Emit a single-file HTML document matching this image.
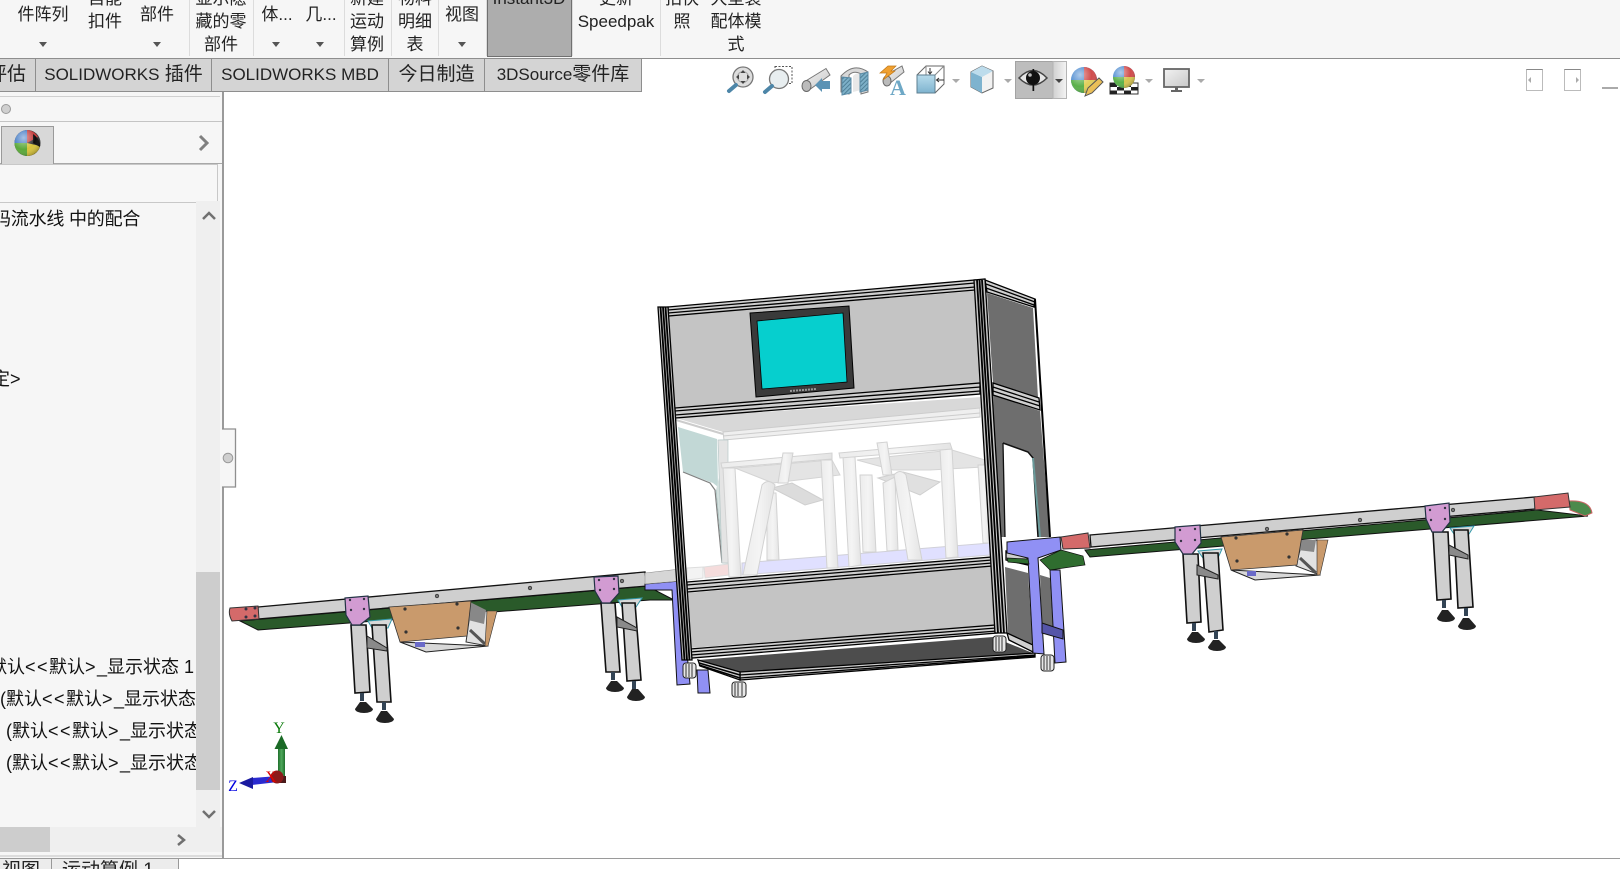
<!DOCTYPE html>
<html lang="zh"><head><meta charset="utf-8"><title>SOLIDWORKS</title>
<style>
html,body{margin:0;padding:0;width:1620px;height:869px;overflow:hidden;background:#fff}
body{position:relative;font-family:"Liberation Sans","Noto Sans CJK SC",sans-serif;color:#1a1a1a}
.a{position:absolute}
.tb{position:absolute;top:0;left:0;width:1620px;height:58px;background:#f6f6f6;border-bottom:1px solid #8e8e8e;box-sizing:content-box}
.l{position:absolute;width:120px;text-align:center;font-size:17px;line-height:23px;white-space:nowrap;color:#222}
.s{position:absolute;top:0;width:1px;height:56px;background:#dcdcdc}
.d{position:absolute;top:42px;width:0;height:0;border-left:4px solid transparent;border-right:4px solid transparent;border-top:5px solid #555}
.t{position:absolute;top:59px;height:32px;background:#d4d4d4;border-right:1px solid #8e8e8e;border-bottom:1px solid #8e8e8e;font-size:19px;line-height:32px;text-align:center;white-space:nowrap;color:#222;box-sizing:content-box;overflow:hidden}
.t i{font-style:normal;font-size:17px}
.tr{position:absolute;font-size:18px;line-height:24px;white-space:nowrap;color:#111}
.tr b{font-weight:400;letter-spacing:1.500px}
</style></head><body>
<div class="tb"></div>
<div class="l" style="left:-17px;top:3px">件阵列</div><div class="d" style="left:39px"></div>
<div class="l" style="left:45px;top:-13px">自能<br>扣件</div>
<div class="l" style="left:97px;top:3px">部件</div><div class="d" style="left:153px"></div>
<div class="s" style="left:189px"></div>
<div class="l" style="left:161px;top:-13px">显示隐<br>藏的零<br>部件</div>
<div class="s" style="left:253px"></div>
<div class="l" style="left:217px;top:3px">体...</div><div class="d" style="left:272px"></div>
<div class="l" style="left:261px;top:3px">几...</div><div class="d" style="left:316px"></div>
<div class="s" style="left:344px"></div>
<div class="l" style="left:307px;top:-13px">新建<br>运动<br>算例</div>
<div class="s" style="left:391px"></div>
<div class="l" style="left:355px;top:-13px">物料<br>明细<br>表</div>
<div class="s" style="left:438px"></div>
<div class="l" style="left:402px;top:3px">视图</div><div class="d" style="left:458px"></div>
<div class="s" style="left:486px"></div>
<div class="a" style="left:487px;top:-2px;width:83px;height:57px;background:#adadad;border:1px solid #707070"></div>
<div class="l" style="left:469px;top:-13px">Instant3D</div>
<div class="s" style="left:572px"></div>
<div class="l" style="left:556px;top:-13px">更新<br>Speedpak</div>
<div class="s" style="left:660px"></div>
<div class="l" style="left:622px;top:-13px">拍快<br>照</div>
<div class="l" style="left:676px;top:-13px">大型装<br>配体模<br>式</div>

<div class="t" style="left:0;width:35px"><span class="a" style="left:-12px;top:0">评估</span></div>
<div class="t" style="left:36px;width:175px"><i>SOLIDWORKS</i> 插件</div>
<div class="t" style="left:212px;width:176px"><i>SOLIDWORKS MBD</i></div>
<div class="t" style="left:389px;width:95px">今日制造</div>
<div class="t" style="left:485px;width:156px"><i>3DSource</i>零件库</div>

<!-- sidebar -->
<div class="a" style="left:0;top:92px;width:222px;height:766px;background:#f6f6f6;border-right:2px solid #9a9a9a;box-sizing:content-box"></div>
<div class="a" style="left:0;top:96px;width:220px;height:1px;background:#d0d0d0"></div>
<div class="a" style="left:0;top:121px;width:222px;height:1px;background:#c4c4c4"></div>
<div class="a" style="left:0;top:163px;width:222px;height:1px;background:#a8a8a8"></div>
<div class="a" style="left:1px;top:126px;width:51px;height:37px;background:#d8d8d8;border:1px solid #9a9a9a;border-bottom:0"></div>
<div class="a" style="left:-2px;top:164px;width:218px;height:37px;border:1px solid #c8c8c8;background:#f7f7f7"></div>
<div class="a" style="left:196px;top:201px;width:24px;height:626px;background:#efefef"></div>
<div class="a" style="left:196px;top:572px;width:24px;height:218px;background:#cdcdcd"></div>
<div class="a" style="left:0;top:827px;width:222px;height:25px;background:#efefef"></div>
<div class="a" style="left:0;top:827px;width:50px;height:25px;background:#cdcdcd"></div>
<div class="a" style="left:0;top:855px;width:222px;height:2px;background:#dcdcdc"></div>

<div class="tr" style="left:-7px;top:207px;letter-spacing:-.2px">码流水线 中的配合</div>
<div class="tr" style="left:-8px;top:367px">定&gt;</div>
<div class="a" style="left:0;top:620px;width:196px;height:170px;overflow:hidden">
<div class="tr" style="left:-11px;top:35px">默认<b>&lt;&lt;</b>默认<b>&gt;</b>_显示状态 1</div>
<div class="tr" style="left:0;top:67px">(默认<b>&lt;&lt;</b>默认<b>&gt;</b>_显示状态 1</div>
<div class="tr" style="left:6px;top:99px">(默认<b>&lt;&lt;</b>默认<b>&gt;</b>_显示状态 1</div>
<div class="tr" style="left:6px;top:131px">(默认<b>&lt;&lt;</b>默认<b>&gt;</b>_显示状态 1</div>
</div>

<div class="a" style="left:0;top:858px;width:1620px;height:1px;background:#9a9a9a"></div>
<div class="a" style="left:0;top:859px;width:1620px;height:10px;background:#fff"></div>
<div class="a" style="left:0;top:859px;width:178px;height:10px;background:#ececec"></div>
<div class="a" style="left:51px;top:859px;width:1px;height:10px;background:#999"></div>
<div class="a" style="left:178px;top:859px;width:1px;height:10px;background:#999"></div>
<div class="a" style="left:0;top:856px;width:178px;height:13px;overflow:hidden;font-size:19px;line-height:24px;white-space:nowrap;color:#222">
<span class="a" style="left:2px;top:3px">视图</span><span class="a" style="left:62px;top:3px">运动算例 1</span></div>

<svg class="a" style="left:0;top:0" width="1620" height="869" viewBox="0 0 1620 869" xmlns="http://www.w3.org/2000/svg">
<defs>
<linearGradient id="tube" x1="0" x2="1" y1="0" y2="0"><stop offset="0" stop-color="#ececec"/><stop offset=".5" stop-color="#f4f4f4"/><stop offset="1" stop-color="#e4e4e4"/></linearGradient>
<linearGradient id="blue" x1="0" x2="0" y1="0" y2="1"><stop offset="0" stop-color="#b8dcec"/><stop offset="1" stop-color="#7eb3cf"/></linearGradient>
<linearGradient id="grn" x1="0" x2="1" y1="0" y2="0"><stop offset="0" stop-color="#1f6f2c"/><stop offset=".5" stop-color="#4fa85c"/><stop offset="1" stop-color="#1f6f2c"/></linearGradient>
<radialGradient id="gl" cx=".35" cy=".3" r=".75"><stop offset="0" stop-color="#fff" stop-opacity=".55"/><stop offset=".6" stop-color="#fff" stop-opacity="0"/><stop offset="1" stop-color="#000" stop-opacity=".25"/></radialGradient>
<linearGradient id="mon" x1="0" x2="1" y1="0" y2="1"><stop offset="0" stop-color="#f2f2f2"/><stop offset="1" stop-color="#c8c8c8"/></linearGradient>
<linearGradient id="dd" x1="0" x2="1" y1="0" y2="0"><stop offset="0" stop-color="#d0d0d0"/><stop offset="1" stop-color="#f4f4f4"/></linearGradient>
<pattern id="hat" width="3" height="3" patternUnits="userSpaceOnUse" patternTransform="rotate(45)"><rect width="3" height="3" fill="#7db0c8"/><rect width="1" height="3" fill="#4f8097"/></pattern>
</defs>

<!-- sidebar controls -->
<circle cx="6" cy="109" r="4.5" fill="#d0d0d0" stroke="#999"/>
<g><circle cx="27.500" cy="143" r="13" fill="#333"/>
<path d="M27 130A13 13 0 0 0 14.500 143H27Z" fill="#3f78c4"/>
<path d="M14.500 143A13 13 0 0 0 27 156V143Z" fill="#5aa83a"/>
<path d="M27 156A13 13 0 0 0 40 146L27 143Z" fill="#d6c23a"/>
<path d="M27 130A13 13 0 0 1 38 137L27 143Z" fill="#c23a3a"/>
<path d="M33 134Q41 140 40 147L33 143Z" fill="#0c0c0c"/><circle cx="27.500" cy="143" r="13" fill="url(#gl)"/></g>
<path d="M200 136l7 7-7 7" fill="none" stroke="#808080" stroke-width="3"/>
<path d="M203 219l6-6 6 6" fill="none" stroke="#707070" stroke-width="2.500"/>
<path d="M203 811l6 6 6-6" fill="none" stroke="#707070" stroke-width="2.500"/>
<path d="M178 835l6 5-6 5" fill="none" stroke="#707070" stroke-width="2.500"/>
<!-- collapse handle -->
<path d="M222 429H235V487H222Z" fill="#f6f6f6"/><path d="M222 429H235.500V487H222" fill="none" stroke="#8f8f8f" stroke-width="1.300"/>
<rect x="221" y="430" width="2" height="56" fill="#f6f6f6"/>
<circle cx="228" cy="458" r="4.800" fill="#cfcfcf" stroke="#999"/>

<!-- top right icons -->
<g>
<circle cx="743" cy="77" r="10" fill="#ddd" stroke="#777" stroke-width="1.300"/>
<circle cx="743" cy="77" r="5.500" fill="none" stroke="#aaa"/>
<path d="M743 70l2.500 3h-5zM743 84l2.500-3h-5zM736 77l3-2.500v5zM750 77l-3-2.500v5z" fill="#444"/>
<path d="M736 85l-7 6" stroke="#4d86a8" stroke-width="4" stroke-linecap="round"/>
<rect x="775" y="66.500" width="17" height="17" fill="none" stroke="#555" stroke-dasharray="2 1.500"/>
<circle cx="779" cy="79" r="9.500" fill="#e8eef0" stroke="#777" stroke-width="1.300"/>
<path d="M772 86l-7 6" stroke="#4d86a8" stroke-width="4" stroke-linecap="round"/>
<path d="M804 82L826 68.500L830 75L809 90Z" fill="url(#mon)" stroke="#777"/>
<ellipse cx="806.500" cy="86" rx="4.500" ry="5.500" fill="#bbb" stroke="#666"/>
<path d="M830 81H822V78L815 85L822 92V89H830Z" fill="#5b93b5"/>
<path d="M841 76Q854 62 868 72V92L861 94V74Q854 70 849 75V94L841 92Z" fill="#d8d8d8" stroke="#777"/>
<path d="M853 76Q857 72 861 74V90L853 92Z" fill="#e8e8e8"/>
<path d="M842 77L851 78V93L842 95Z" fill="url(#hat)" stroke="#5a8aa5"/>
<path d="M860 74L868 72V90L860 92Z" fill="url(#hat)" stroke="#5a8aa5"/>
<path d="M886 75L902 66L904 72L889 84Z" fill="url(#mon)" stroke="#777"/>
<ellipse cx="887" cy="81" rx="4" ry="5" fill="#bbb" stroke="#666"/>
<path d="M888 66H896L891 71H895L883 80L887 73H880Z" fill="#f0a030" stroke="#c07818" stroke-width=".7"/>
<text x="898" y="95" font-family="Liberation Serif,serif" font-size="22" font-weight="700" fill="#6ea8c6" text-anchor="middle">A</text>
<path d="M917 75L926 66H944V84L935 93" fill="none" stroke="#666"/><path d="M935 75L944 66M926 66V75" fill="none" stroke="#888"/>
<rect x="917" y="75" width="18" height="18" fill="url(#blue)" stroke="#5e7f90"/>
<path d="M930 68V73M928 71.500L930 74L932 71.500M944 80H937M939 78L936.500 80L939 82" stroke="#333" fill="none"/>
<path d="M952 79h8l-4 4z" fill="#aaa"/>
<path d="M971 72L982 66L993 71V88L982 93L971 87Z" fill="#f2f2f2" stroke="#666"/>
<path d="M971 72L982 77V93L971 87Z" fill="#7eb3cf"/><path d="M971 72L982 66L993 71L982 77Z" fill="#bddcec"/>
<path d="M1004 79h8l-4 4z" fill="#aaa"/>
<rect x="1015.500" y="61.500" width="37.500" height="37" fill="#bdbdbd" stroke="#a3a3a3"/>
<rect x="1053" y="61.500" width="13.500" height="37" fill="url(#dd)" stroke="#b4b4b4"/>
<path d="M1019 78Q1033 63 1047 78Q1033 92 1019 78Z" fill="#e6e6e6" stroke="#444" stroke-width="1.500"/>
<circle cx="1033" cy="78" r="7" fill="#111"/><circle cx="1030" cy="75" r="1.800" fill="#bbb"/>
<rect x="1032.500" y="69" width="1.700" height="22" fill="#111"/>
<path d="M1055 79h8l-4 4z" fill="#444"/>
<circle cx="1084" cy="80" r="13" fill="#4d8bd0"/>
<path d="M1084 67A13 13 0 0 1 1097 80H1084Z" fill="#d04c4c"/>
<path d="M1071 80A13 13 0 0 0 1084 93V80Z" fill="#5bb04a"/><path d="M1084 93A13 13 0 0 0 1097 80H1084Z" fill="#e2cf5a"/>
<circle cx="1084" cy="80" r="13" fill="url(#gl)"/>
<path d="M1085 96L1088 88L1099 78L1103 82L1092 93Z" fill="#eabf58" stroke="#555"/>
<rect x="1110" y="83" width="28" height="11" fill="#fff" stroke="#333"/>
<path d="M1110 83h7v4h-7zM1124 83h7v4h-7zM1117 87h7v3.500h-7zM1131 87h7v3.500h-7zM1110 90.500h7v3.500h-7zM1124 90.500h7v3.500h-7z" fill="#222"/>
<circle cx="1124" cy="77" r="11" fill="#4d8bd0"/>
<path d="M1124 66A11 11 0 0 1 1135 77H1124Z" fill="#d04c4c"/>
<path d="M1113 77A11 11 0 0 0 1124 88V77Z" fill="#5bb04a"/><path d="M1124 88A11 11 0 0 0 1135 77H1124Z" fill="#d8c450"/>
<circle cx="1124" cy="77" r="11" fill="url(#gl)"/>
<path d="M1145 79h8l-4 4z" fill="#aaa"/>
<rect x="1164" y="69" width="25" height="18" fill="url(#mon)" stroke="#666" stroke-width="1.800"/>
<path d="M1175 87h3v3h4v2h-11v-2h4z" fill="#666"/>
<path d="M1197 79h8l-4 4z" fill="#aaa"/>
<rect x="1526.500" y="69.500" width="16" height="21" fill="#fff" stroke="#bbb"/><path d="M1526.500 69.500h16" stroke="#888"/><path d="M1531 77v6l-3-3z" fill="#aaa"/>
<rect x="1564.500" y="69.500" width="16" height="21" fill="#fff" stroke="#bbb"/><path d="M1564.500 69.500h16" stroke="#888"/><path d="M1576 77v6l3-3z" fill="#aaa"/>
<rect x="1602" y="87" width="16" height="2" fill="#aaa"/>
</g>

<!-- triad -->
<path d="M278 748H285V777H278Z" fill="url(#grn)"/><path d="M281.500 735L288 749H274.500Z" fill="#1a6a26"/>
<path d="M252 778L278 776V782L252 785Z" fill="#2a2ad0"/><path d="M239 783L253 777V789Z" fill="#1a1aa0"/>
<rect x="278" y="776" width="8" height="7" fill="#4a1a1a"/><circle cx="277" cy="777" r="6.500" fill="#8b1a1a"/>
<text x="279" y="733" font-family="Liberation Serif,serif" font-size="16" fill="#0a7a0a" text-anchor="middle">Y</text>
<text x="233" y="791" font-family="Liberation Serif,serif" font-size="16" fill="#0000e0" text-anchor="middle">Z</text>
<text x="271" y="782" font-family="Liberation Serif,serif" font-size="16" fill="#e00000" text-anchor="middle">X</text>

<!-- left conveyor -->
<path d="M240 621L647 586L674 600L650 600L258 630Z" fill="#2a5a2a" stroke="#111"/>
<path d="M258 607L645 572L647 586L258 619Z" fill="#cfcfcf" stroke="#111" stroke-width="1.300"/>
<path d="M230 608L258 606L259 619L232 621Q228 614 230 608Z" fill="#d46a6a" stroke="#333"/>
<circle cx="437" cy="596" r="1.800" fill="#777" stroke="#222" stroke-width=".6"/><circle cx="530" cy="588" r="1.800" fill="#777" stroke="#222" stroke-width=".6"/><circle cx="622" cy="581" r="1.800" fill="#777" stroke="#222" stroke-width=".6"/>
<circle cx="246" cy="609" r="1.500" fill="#334"/><circle cx="255" cy="608" r="1.500" fill="#334"/><circle cx="246" cy="617" r="1.500" fill="#334"/><circle cx="255" cy="616" r="1.500" fill="#334"/>

<path d="M368 621L392 619L388 628H372Z" fill="#d8d8d8" stroke="#39a"/>
<path d="M372 625L386 625L391 702L377 702Z" fill="#cfcfcf" stroke="#111" stroke-width="1.600"/>
<path d="M351 625L366 625L370 692L355 693Z" fill="#cfcfcf" stroke="#111" stroke-width="1.600"/>
<path d="M367 636L387 648L387 651L367 648Z" fill="#8a8a8a" stroke="#222"/>
<path d="M362 693V701M384 702V710" stroke="#345" stroke-width="4"/>
<path d="M360 702H366L373 709A9 4 0 0 1 355 709Z" fill="#222"/><path d="M381 711H387L394 719A9 4 0 0 1 376 719Z" fill="#222"/>
<path d="M345 598L368 596L370 617L360 625L352 625L346 615Z" fill="#d29bd2" stroke="#234" stroke-width="1.200"/>
<circle cx="350" cy="600" r="1.200" fill="#334"/><circle cx="364" cy="599" r="1.200" fill="#334"/><circle cx="351" cy="610" r="1.200" fill="#334"/><circle cx="364" cy="609" r="1.200" fill="#334"/>

<path d="M618 600L642 598L636 607H622Z" fill="#d8d8d8" stroke="#39a"/>
<path d="M622 603L635 603L641 680L627 681Z" fill="#cfcfcf" stroke="#111" stroke-width="1.600"/>
<path d="M601 603L615 603L620 672L606 672Z" fill="#cfcfcf" stroke="#111" stroke-width="1.600"/>
<path d="M617 617L637 628L637 631L617 627Z" fill="#8a8a8a" stroke="#222"/>
<path d="M613 672V680M634 681V689" stroke="#345" stroke-width="4"/>
<path d="M611 681H617L624 688A9 4 0 0 1 606 688Z" fill="#222"/><path d="M632 689H638L645 697A9 4 0 0 1 627 697Z" fill="#222"/>
<path d="M594 577L618 576L619 593L610 603L602 603L595 591Z" fill="#d29bd2" stroke="#234" stroke-width="1.200"/>
<circle cx="599" cy="580" r="1.200" fill="#334"/><circle cx="614" cy="579" r="1.200" fill="#334"/><circle cx="600" cy="590" r="1.200" fill="#334"/><circle cx="614" cy="589" r="1.200" fill="#334"/>

<path d="M400 642L488 646L426 652Z" fill="#d8d8d8" stroke="#222"/>
<path d="M470 614L487 611L488 646L466 642Z" fill="#e2e2e2" stroke="#333"/>
<path d="M470 602L486 610L484 624L468 620Z" fill="#888"/>
<path d="M470 630L485 644" stroke="#555" stroke-width="3"/>
<path d="M487 611L497 611L488 646L485 646Z" fill="#c99a6c" stroke="#333" stroke-width=".6"/>
<path d="M389 607L471 601L467 636L400 642Z" fill="#c99a6c" stroke="#333" stroke-width=".8"/>
<circle cx="405" cy="609" r="1.600" fill="#333"/><circle cx="457" cy="604" r="1.600" fill="#333"/><circle cx="406" cy="632" r="1.600" fill="#333"/><circle cx="458" cy="628" r="1.600" fill="#333"/>
<rect x="415" y="642" width="10" height="5" fill="#6a6ac8"/>

<!-- right conveyor -->
<path d="M1085 550L1537 510L1588 516L1090 557Z" fill="#2a5a2a" stroke="#111"/>
<path d="M1569 501Q1590 500 1592 513L1585 516L1570 510Z" fill="#4c8a4c" stroke="#c66"/>
<path d="M1090 535L1535 497L1535 509L1091 547Z" fill="#cfcfcf" stroke="#111" stroke-width="1.300"/>
<path d="M1061 537L1088 533L1090 548L1063 549Z" fill="#d46a6a" stroke="#333"/>
<path d="M1534 497L1568 493L1570 507L1535 510Z" fill="#d46a6a" stroke="#333"/>
<circle cx="1267" cy="529" r="1.800" fill="#777" stroke="#222" stroke-width=".6"/><circle cx="1360" cy="520" r="1.800" fill="#777" stroke="#222" stroke-width=".6"/>
<circle cx="1453" cy="510" r="1.800" fill="#777" stroke="#222" stroke-width=".6"/>

<path d="M1198 551L1222 549L1218 558H1203Z" fill="#d8d8d8" stroke="#39a"/>
<path d="M1203 553L1218 553L1223 630L1209 632Z" fill="#cfcfcf" stroke="#111" stroke-width="1.600"/>
<path d="M1183 554L1198 554L1201 622L1187 623Z" fill="#cfcfcf" stroke="#111" stroke-width="1.600"/>
<path d="M1197 565L1218 575L1218 579L1197 575Z" fill="#8a8a8a" stroke="#222"/>
<path d="M1194 623V631M1216 631V639" stroke="#345" stroke-width="4"/>
<path d="M1192 632H1198L1205 639A9 4 0 0 1 1187 639Z" fill="#222"/><path d="M1213 640H1219L1226 647A9 4 0 0 1 1208 647Z" fill="#222"/>
<path d="M1175 527L1200 525L1201 543L1192 554L1183 554L1175 542Z" fill="#d29bd2" stroke="#234" stroke-width="1.200"/>
<circle cx="1180" cy="530" r="1.200" fill="#334"/><circle cx="1195" cy="529" r="1.200" fill="#334"/><circle cx="1181" cy="541" r="1.200" fill="#334"/><circle cx="1195" cy="540" r="1.200" fill="#334"/>

<path d="M1450 528L1474 526L1469 534H1454Z" fill="#d8d8d8" stroke="#39a"/>
<path d="M1454 530L1468 530L1473 607L1458 608Z" fill="#cfcfcf" stroke="#111" stroke-width="1.600"/>
<path d="M1433 532L1448 532L1451 599L1437 600Z" fill="#cfcfcf" stroke="#111" stroke-width="1.600"/>
<path d="M1449 545L1468 555L1468 559L1449 555Z" fill="#8a8a8a" stroke="#222"/>
<path d="M1444 600V608M1466 608V616" stroke="#345" stroke-width="4"/>
<path d="M1442 610H1448L1455 618A9 4 0 0 1 1437 618Z" fill="#222"/><path d="M1463 618H1469L1476 626A9 4 0 0 1 1458 626Z" fill="#222"/>
<path d="M1425 506L1449 503L1450 522L1442 532L1432 532L1426 519Z" fill="#d29bd2" stroke="#234" stroke-width="1.200"/>
<circle cx="1430" cy="510" r="1.200" fill="#334"/><circle cx="1445" cy="508" r="1.200" fill="#334"/><circle cx="1431" cy="520" r="1.200" fill="#334"/><circle cx="1445" cy="519" r="1.200" fill="#334"/>

<path d="M1231 570L1320 575L1255 580Z" fill="#d8d8d8" stroke="#222"/>
<path d="M1302 542L1317 540L1320 575L1296 566Z" fill="#e2e2e2" stroke="#333"/>
<path d="M1300 540L1316 540L1314 552L1298 550Z" fill="#888"/>
<path d="M1300 558L1316 573" stroke="#555" stroke-width="3"/>
<path d="M1317 540L1328 540L1320 575L1317 575Z" fill="#c99a6c" stroke="#333" stroke-width=".6"/>
<path d="M1221 537L1303 530L1297 565L1231 570Z" fill="#c99a6c" stroke="#333" stroke-width=".8"/>
<circle cx="1236" cy="538" r="1.600" fill="#333"/><circle cx="1287" cy="534" r="1.600" fill="#333"/><circle cx="1237" cy="561" r="1.600" fill="#333"/><circle cx="1289" cy="557" r="1.600" fill="#333"/>
<rect x="1247" y="571" width="9" height="5" fill="#6a6ac8"/>

<!-- cabinet interior -->
<path d="M676 418L981 397L981 408L723 432Z" fill="#d8d8d8"/>
<path d="M723 432L980 408L980 417L724 440Z" fill="#efefef" stroke="#cccccc"/>
<path d="M723 436L980 413" stroke="#ccc"/>
<path d="M676 420L723 434" stroke="#ccc" stroke-width="2"/>
<path d="M678 427L717 439L718 487L713 483L683 472Z" fill="#c2d8d6"/>
<path d="M683 472L710 483L715 490L722 563" fill="none" stroke="#808080" stroke-width="1.200"/>
<path d="M716 490L723 563L728 563L720 440H728" fill="#d4e0de" stroke="#a5bdbb" stroke-width=".7"/>
<path d="M718 440L728 440L728 563L722 563Z" fill="#e4e4e4" stroke="#b8c8c8" stroke-width=".7"/>
<path d="M735 468L832 460L840 475L773 483Z" fill="#e4e4e4" stroke="#d4d4d4"/>
<path d="M857 460L952 450L985 460L983 467L930 470L893 470Z" fill="#e4e4e4" stroke="#d4d4d4"/>
<path d="M772 488L792 483L823 500L805 505Z" fill="#dcdcdc" stroke="#cfcfcf"/>
<path d="M878 478L903 472L940 482L920 495Z" fill="#e0e0e0" stroke="#cfcfcf"/>
<path d="M742 563L990 543L990 555L742 575Z" fill="#e0e0ff" stroke="#d0d0d8"/>
<path d="M687 568L703 567L703 578L687 580Z" fill="#f3f3f3" stroke="#ddd"/><path d="M704 567L729 564L729 575L705 578Z" fill="#f5dcdc" stroke="#ddd"/>
<g fill="url(#tube)" stroke="#d2d2d2">
<path d="M767 493L776 493L779 560L767 560Z"/><path d="M860 475L872 475L876 552L863 552Z"/><path d="M883 483L895 477L898 550L887 551Z"/><path d="M978 465L985 465L990 543L983 543Z"/>
<path d="M723 468L735 468L741 577L729 577Z"/><path d="M821 460L832 460L838 568L827 568Z"/><path d="M843 457L855 457L861 565L849 567Z"/><path d="M940 449L952 449L958 557L946 558Z"/>
<path d="M762 485Q768 478 775 485L757 575L743 575Z"/><path d="M894 475Q900 468 906 475L922 560L908 560Z"/>
<path d="M721 463L832 453L832 459L722 468Z"/><path d="M839 453L950 443L952 449L840 458Z"/>
<path d="M783 453L793 453L788 483L778 483Z"/><path d="M877 443L887 442L892 475L883 475Z"/>
</g>

<!-- lower side / floor -->
<path d="M1005 567L1028 573L1033 653L1008 633Z" fill="#6e6e6e"/>
<path d="M1040 575L1050 578L1053 630L1042 628Z" fill="#6e6e6e"/>
<path d="M698 660L993 637L1035 654L740 672Z" fill="#4d4d4d"/>
<!-- purple rear -->
<path d="M645 584L680 581L690 684L677 685L672 590L645 590Z" fill="#9090f4" stroke="#111"/>
<path d="M645 573L680 569L680 581L645 584Z" fill="#d6d6d6" stroke="#888" stroke-width=".5"/>
<path d="M697 670L708 670L710 693L698 693Z" fill="#9090f4" stroke="#111"/>

<!-- panels -->
<path d="M669 316L974 291L980 383L675 408Z" fill="#c4c4c4"/>
<path d="M687 593L993 566L996 625L690 648Z" fill="#c4c4c4"/>
<path d="M987 293L1033 308L1038 398L993 383Z" fill="#6e6e6e"/>
<path d="M993 395L1040 411L1050 537L1038 537L1033 458L1028 452L1003 443L1005 537L997 537Z" fill="#6e6e6e"/>
<path d="M1003 443L1028 452L1033 458L1038 537" fill="none" stroke="#111" stroke-width="1.500"/>
<path d="M1033 458L1040 537" fill="none" stroke="#6a9a9a" stroke-width="2"/>
<path d="M1003 443L1005 537" stroke="#111" stroke-width="1.300"/>
<!-- monitor -->
<path d="M750 313L849 306L854 388L756 397Z" fill="#3a3a3a" stroke="#000"/>
<path d="M757 321L843 313L847 382L762 389Z" fill="#06cfce" stroke="#000" stroke-width=".8"/>
<path d="M790 391L816 389" stroke="#999" stroke-width="2" stroke-dasharray="2 1"/>

<!-- rails -->
<g fill="#cfcfcf" stroke="#000" stroke-width="1.300">
<path d="M668 307L975 280L975 290L668 316Z"/>
<path d="M675 408L980 383L980 394L675 418Z"/>
<path d="M687 582L992 557L992 566L687 592Z"/>
<path d="M690 649L996 625L997 633L692 658Z"/>
<path d="M740 672L1035 653L1035 657L740 680Z"/>
<path d="M985 280L1035 299L1034 307L987 292Z"/>
<path d="M993 383L1039 398L1040 410L993 395Z"/>
<path d="M698 660L740 672L740 680L700 666Z"/>
<path d="M1006 551L1028 558L1028 565L1006 560Z"/>
<path d="M1007 633L1033 645L1033 652L1009 640Z"/>
</g>
<g fill="none" stroke="#000" stroke-width="1.300">
<path d="M668 310L975 283M668 313L975 287"/>
<path d="M675 411L980 387M675 415L980 391"/>
<path d="M687 585L992 560M687 589L992 563"/>
<path d="M690 652L996 628M691 655L997 631"/>
<path d="M740 675L1035 655M740 678L1035 656"/>
<path d="M986 284L1035 302M986 288L1034 305"/>
<path d="M993 387L1039 402M993 391L1040 406"/>
<path d="M699 663L740 675M699 665L740 678" stroke-width="1.500"/>
</g>
<!-- posts -->
<path d="M658 307L668 307L692 660L682 660Z" fill="#c8c8c8" stroke="#000" stroke-width="1.300"/>
<path d="M660.500 307L684.500 660M663 307L687 660M665.500 307L689.500 660" stroke="#000" stroke-width="1.800"/>
<path d="M974 280L985 279L1007 633L995 633Z" fill="#c8c8c8" stroke="#000" stroke-width="1.300"/>
<path d="M977 280L998 633M979.500 280L1001 633M982 280L1004 633" stroke="#000" stroke-width="1.800"/>
<path d="M1035 299L1050 537" fill="none" stroke="#000" stroke-width="2"/>

<!-- right purple T -->
<path d="M1007 542L1060 537L1061 550L1038 558L1044 654L1033 653L1028 558L1007 553Z" fill="#9090f4" stroke="#111"/>
<path d="M1040 560L1061 550L1083 556L1085 565L1050 570Z" fill="#2f6d2f" stroke="#111" stroke-width=".7"/>
<path d="M1007 558L1028 559L1029 564L1008 562Z" fill="#2f6d2f" stroke="#111" stroke-width=".7"/>
<path d="M1050 570L1060 570L1066 662L1055 663Z" fill="#9090f4" stroke="#111"/>
<path d="M1042 623L1063 630L1063 639L1042 633Z" fill="#5555a8" stroke="#111"/>
<!-- casters -->
<g fill="#e8e8e8" stroke="#222">
<rect x="683" y="663" width="13" height="15" rx="3"/><rect x="732" y="682" width="14" height="15" rx="3"/><rect x="993" y="636" width="13" height="16" rx="3"/><rect x="1041" y="655" width="13" height="16" rx="3"/>
</g>
<path d="M686 664v13M689 664v13M692 664v13M735 683v13M738 683v13M742 683v13M996 637v14M999 637v14M1002 637v14M1044 656v14M1047 656v14M1050 656v14" stroke="#333"/>
</svg>
</body></html>
